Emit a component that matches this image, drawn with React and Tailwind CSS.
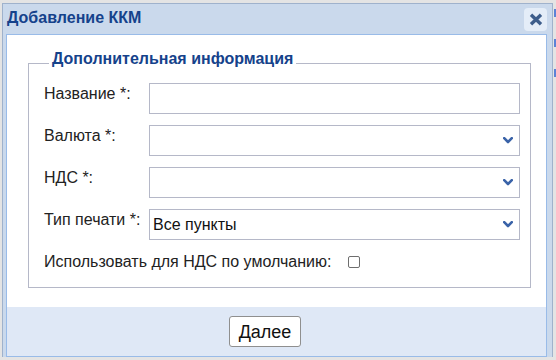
import React from "react";

function Chevron() {
  return (
    <svg width="10" height="7" viewBox="0 0 10 7" className="shrink-0">
      <path d="M1.2 1.2 L5 5 L8.8 1.2" fill="none" stroke="#3a63a8" strokeWidth="2.6" strokeLinecap="round" strokeLinejoin="round" />
    </svg>
  );
}

function Row({ label, children, first }) {
  return (
    <div className={"flex " + (first ? "" : "mt-[11px]")}>
      <div className="w-[105px] pt-[2px] leading-[18px] text-[16px] text-[#222]">{label}</div>
      {children}
    </div>
  );
}

function SelectBox({ value }) {
  return (
    <div className="flex-1 h-[31px] border border-[#b5b8c8] bg-white flex items-center pl-[3px] pr-[6px]">
      <span className="flex-1 text-[16px] leading-[18px] text-[#111]">{value}</span>
      <Chevron />
    </div>
  );
}

export default function App() {
  return (
    <div className="w-[556px] h-[360px] bg-[#e4e4e4] flex pl-[2px] pt-[3px] font-['Liberation_Sans',Arial,sans-serif] overflow-hidden">
      <div className="w-[551px] h-[354px] border-l border-t border-r border-[#9fb2cc] bg-[#cad9ec] pl-[3px] pr-[5px] flex flex-col">
        <div className="h-[30px] flex items-start justify-between">
          <div className="mt-[5px] pl-[1px] text-[16px] leading-[18px] font-bold text-[#15428b]">Добавление ККМ</div>
          <div className="mt-[4px] w-[23px] h-[23px] rounded-[4px] bg-[#e4edf8] flex items-center justify-center">
            <svg width="14" height="13" viewBox="0 0 14 13">
              <path d="M2 1.8 L12 11.2 M12 1.8 L2 11.2" fill="none" stroke="#3d5d8b" strokeWidth="3.4" />
            </svg>
          </div>
        </div>
        <div className="flex-1 border border-[#99bbe8] flex flex-col">
          <div className="flex-1 bg-white pt-[15px]">
            <fieldset className="ml-[21px] mr-[15px] border border-[#b5b8c8] pt-[7px] pl-[15px] pr-[10px] pb-[16px]">
              <legend className="ml-[5px] px-[3px] pb-[8px] text-[16px] leading-[18px] font-bold text-[#15428b]">
                Дополнительная информация
              </legend>
              <Row label="Название *:" first>
                <div className="flex-1 h-[31px] border border-[#b5b8c8] bg-white" />
              </Row>
              <Row label="Валюта *:">
                <SelectBox value="" />
              </Row>
              <Row label="НДС *:">
                <SelectBox value="" />
              </Row>
              <Row label="Тип печати *:">
                <SelectBox value="Все пункты" />
              </Row>
              <div className="mt-[13px] flex items-center gap-[17px] text-[16px] leading-[18px] text-[#222]">
                <span>Использовать для НДС по умолчанию:</span>
                <span className="w-[12px] h-[12px] border border-[#6e6e6e] rounded-[2px] bg-white" />
              </div>
            </fieldset>
          </div>
          <div className="h-[49px] bg-[#dfe8f6] flex items-center pl-[222px]">
            <button className="w-[72px] h-[31px] border border-[#8f8f8f] rounded-[3px] bg-white text-[18px] leading-[20px] text-[#111] font-['Liberation_Sans',Arial,sans-serif]">
              Далее
            </button>
          </div>
        </div>
      </div>
      <div className="ml-[1px] w-[2px] flex flex-col">
        <div className="mt-[6px] h-[8px] bg-[#5b82d6]" />
        <div className="mt-[22px] h-[8px] bg-[#5b82d6]" />
        <div className="mt-[22px] h-[8px] bg-[#5b82d6]" />
      </div>
    </div>
  );
}
